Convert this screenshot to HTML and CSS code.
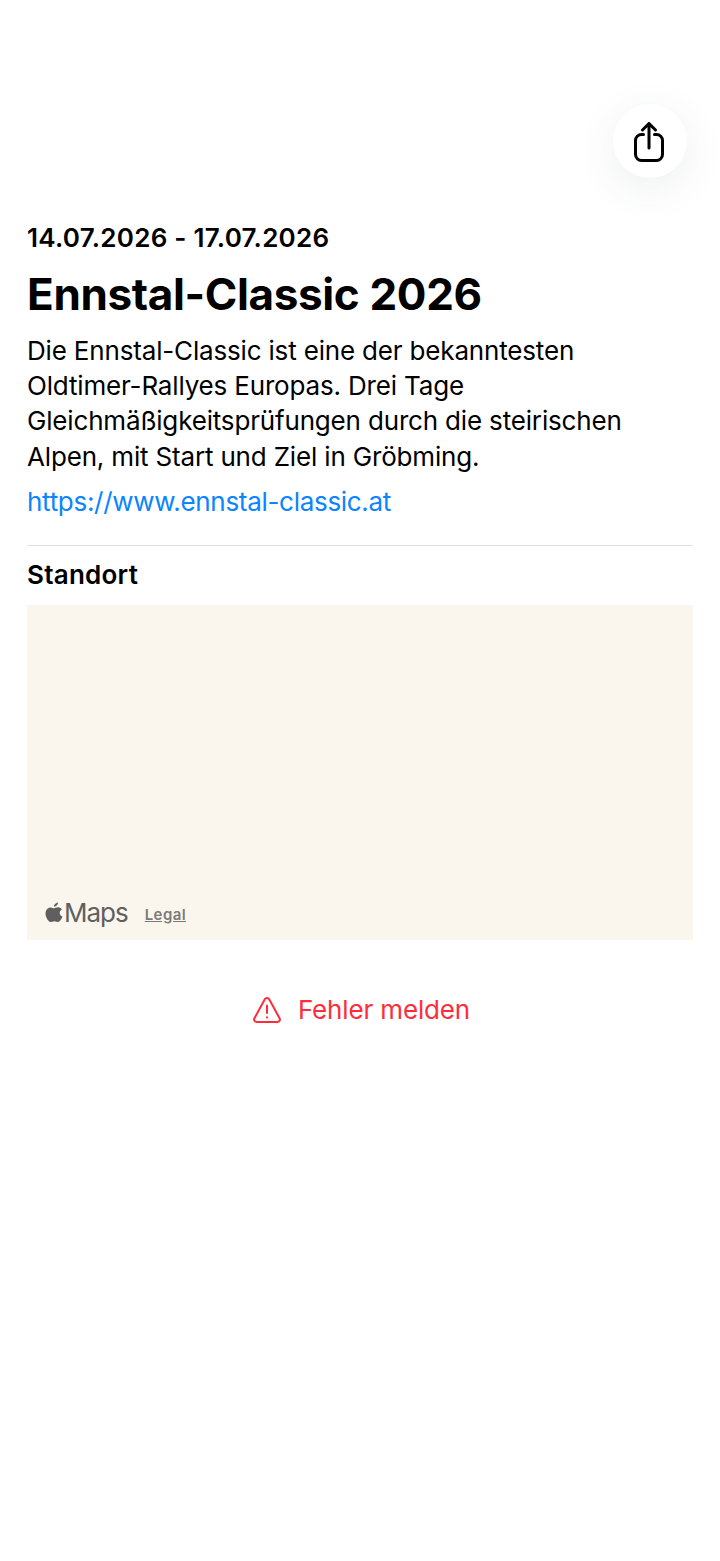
FILE: index.html
```html
<!DOCTYPE html>
<html lang="de">
<head>
    <meta charset="UTF-8">
    <meta name="viewport" content="width=device-width, initial-scale=1.0">
    <title>Ennstal-Classic 2026</title>
    <link rel="stylesheet" href="styles.css">
</head>
<body>

    <div class="top-bar">
        <button class="share-button" aria-label="Teilen">
            <svg width="30" height="40" viewBox="0 0 30 40" fill="none" stroke="#000" stroke-width="3" stroke-linecap="round" stroke-linejoin="round">
                <path d="M9.500 12.500H7.500A6 6 0 0 0 1.500 18.500V32.500A6 6 0 0 0 7.500 38.500H22.500A6 6 0 0 0 28.500 32.500V18.500A6 6 0 0 0 22.500 12.500H20.500"/>
                <path d="M15 26V2M8.500 8L15 1.500L21.500 8"/>
            </svg>
        </button>
    </div>

    <div class="content">
        <p class="dates">14.07.2026 - 17.07.2026</p>
        <h1>Ennstal-Classic 2026</h1>
        <p class="description">Die Ennstal-Classic ist eine der bekanntesten Oldtimer-Rallyes Europas. Drei Tage Gleichmäßigkeitsprüfungen durch die steirischen Alpen, mit Start und Ziel in Gröbming.</p>
        <a class="link" href="#">https://www.ennstal-classic.at</a>

        <hr class="divider">

        <h2>Standort</h2>
        <div class="map">
            <div class="map-credit">
                <svg class="apple-logo" width="18" height="22" viewBox="0 0 18 22" fill="#5f5f5f">
                    <path d="M13 .5C13.100 2.300 11.500 4.700 9 4.700C8.800 2.700 10.700 .7 13 .5Z"/>
                    <path d="M9.100 6.300C10 6.300 11.200 5.300 12.900 5.300C14.700 5.300 16.100 6.200 16.900 7.400C15.300 8.400 14.600 9.600 14.700 11C14.800 12.700 15.800 13.900 17.500 14.500C16.500 17.200 14.800 20 13 20C11.700 20 11 19.200 9.400 19.200C7.800 19.200 7 20 5.800 20C3.500 20 .5 15.500 .5 11.600C.5 7.600 3.100 5.400 5.500 5.400C7.100 5.400 8.200 6.300 9.100 6.300Z"/>
                </svg>
                <span class="maps-word">Maps</span>
                <span class="legal">Legal</span>
            </div>
        </div>

        <a class="report" href="#">
            <svg width="30" height="28" viewBox="0 0 30 28" fill="none" stroke="#ff2d3a" stroke-width="2" stroke-linecap="round" stroke-linejoin="round">
                <path d="M12.800 3.200A2.500 2.500 0 0 1 17.200 3.200L27.700 22.500A2.500 2.500 0 0 1 25.500 26H4.500A2.500 2.500 0 0 1 2.300 22.500Z"/>
                <path d="M15 9.500V17"/>
                <path d="M15 21.200V21.400"/>
            </svg>
            <span>Fehler melden</span>
        </a>
    </div>

</body>
</html>
```

FILE: styles.css
```css
body {
    margin: 0;
    background: #fff;
    color: #000;
    font-family: Inter, "Liberation Sans", sans-serif;
}

.top-bar {
    display: flex;
    justify-content: flex-end;
    padding: 104px 33px 0 0;
}

.share-button {
    display: flex;
    align-items: center;
    justify-content: center;
    width: 74px;
    height: 74px;
    padding: 1px 3px 0 0;
    border: none;
    border-radius: 50%;
    background: #fff;
    box-shadow: 0 10px 40px rgba(60, 80, 70, 0.09);
}

.content {
    padding: 0 27px;
}

.dates {
    margin: 42px 0 0;
    font-size: 26px;
    font-weight: 600;
    letter-spacing: 0.27px;
    line-height: 36px;
}

h1 {
    margin: 11px 0 0;
    font-size: 44px;
    font-weight: 700;
    letter-spacing: -0.35px;
    line-height: 54px;
}

.description {
    margin: 12px 0 0;
    font-size: 26px;
    letter-spacing: -0.17px;
    line-height: 35.200px;
}

.link {
    display: block;
    margin-top: 10px;
    color: #0a84ff;
    font-size: 26px;
    letter-spacing: -0.3px;
    line-height: 36px;
    text-decoration: none;
}

.divider {
    height: 1px;
    margin: 25px 0 0;
    border: none;
    background: #e2e2e2;
}

h2 {
    margin: 11px 0 0;
    font-size: 26px;
    font-weight: 600;
    letter-spacing: 0.25px;
    line-height: 36px;
}

.map {
    position: relative;
    height: 335px;
    margin-top: 12px;
    background: #faf6ee;
}

.map-credit {
    position: absolute;
    left: 18px;
    bottom: 12px;
    display: flex;
    align-items: center;
    color: #5f5f5f;
}

.maps-word {
    margin-left: 1px;
    font-size: 26px;
    letter-spacing: -1px;
    line-height: 30px;
}

.legal {
    margin: 3px 0 0 17px;
    font-size: 15px;
    font-weight: 600;
    letter-spacing: 0.4px;
    color: #7a7a7a;
    text-decoration: underline;
}

.report {
    display: flex;
    align-items: center;
    justify-content: center;
    gap: 16px;
    margin: 52px 0 0 2px;
    color: #ff2d3a;
    font-size: 26px;
    letter-spacing: -0.15px;
    line-height: 36px;
    text-decoration: none;
}
```
